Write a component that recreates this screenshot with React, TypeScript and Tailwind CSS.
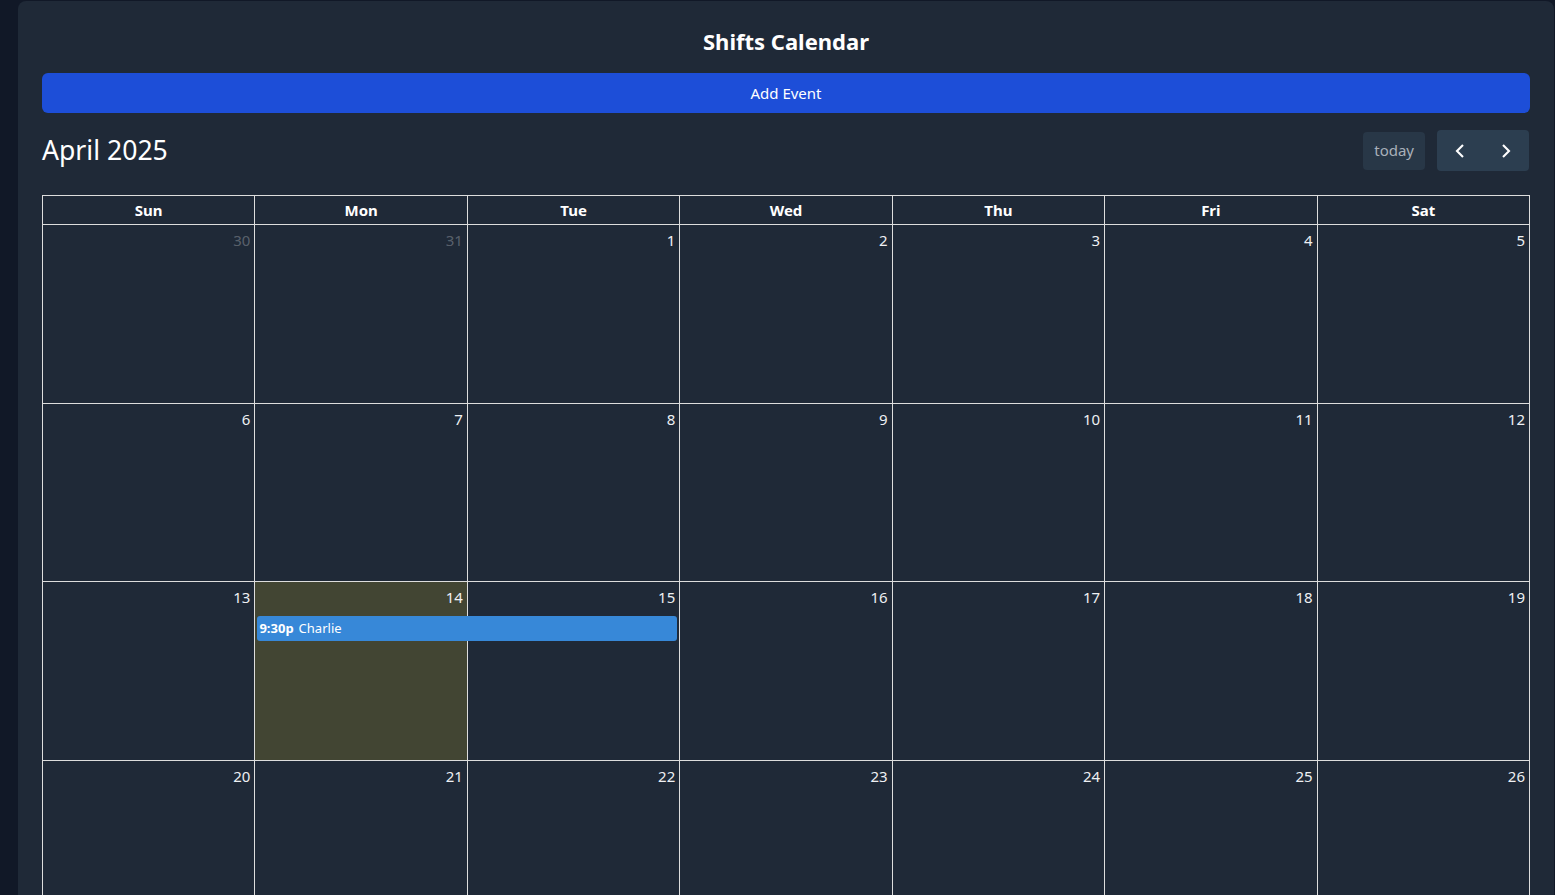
import React from "react";

const days = ["Sun", "Mon", "Tue", "Wed", "Thu", "Fri", "Sat"];

type Cell = { n: number; other?: boolean; today?: boolean };

const weeks: Cell[][] = [
  [{ n: 30, other: true }, { n: 31, other: true }, { n: 1 }, { n: 2 }, { n: 3 }, { n: 4 }, { n: 5 }],
  [{ n: 6 }, { n: 7 }, { n: 8 }, { n: 9 }, { n: 10 }, { n: 11 }, { n: 12 }],
  [{ n: 13 }, { n: 14, today: true }, { n: 15 }, { n: 16 }, { n: 17 }, { n: 18 }, { n: 19 }],
  [{ n: 20 }, { n: 21 }, { n: 22 }, { n: 23 }, { n: 24 }, { n: 25 }, { n: 26 }],
  [{ n: 27 }, { n: 28 }, { n: 29 }, { n: 30 }, { n: 1, other: true }, { n: 2, other: true }, { n: 3, other: true }],
  [{ n: 4, other: true }, { n: 5, other: true }, { n: 6, other: true }, { n: 7, other: true }, { n: 8, other: true }, { n: 9, other: true }, { n: 10, other: true }],
];

const Chevron = ({ dir }: { dir: "l" | "r" }) => (
  <svg width="18" height="18" viewBox="0 0 24 24" fill="none" stroke="currentColor" strokeWidth="2.8" strokeLinecap="square" strokeLinejoin="miter">
    {dir === "l" ? <path d="M15 5l-7 7 7 7" /> : <path d="M9 5l7 7-7 7" />}
  </svg>
);

export default function App() {
  return (
    <div
      className="min-h-screen bg-[#111827] text-white overflow-hidden"
      style={{ fontFamily: '"Noto Sans", "Open Sans", sans-serif' }}
    >
      <div className="ml-[18px] mt-px w-[1536px] rounded-t-lg bg-[#1f2937] px-6 pt-6">
        <h1 className="text-center text-[22px] leading-8 font-bold text-white">Shifts Calendar</h1>
        <button className="mt-4 h-10 w-full rounded-md bg-[#1d4ed8] text-[15px] text-white">Add Event</button>

        <div className="mt-[17px] mb-6 flex h-[41px] items-center justify-between">
          <h2 className="text-[26.6px] leading-none text-white">April 2025</h2>
          <div className="mr-px flex items-center gap-3">
            <button className="h-[38px] rounded bg-[#283747] px-[11px] text-[15px] text-[#a8b0ba]">today</button>
            <div className="flex h-[41px] overflow-hidden rounded bg-[#2c3e50]">
              <button className="flex w-[46px] items-center justify-center text-white">
                <Chevron dir="l" />
              </button>
              <button className="flex w-[46px] items-center justify-center text-white">
                <Chevron dir="r" />
              </button>
            </div>
          </div>
        </div>

        <div className="border-l border-t border-[#dddddd]">
          <div className="grid grid-cols-7">
            {days.map((d) => (
              <div key={d} className="border-b border-r border-[#dddddd] py-[3px] text-center text-[15px] font-bold leading-[22px] text-white">
                {d}
              </div>
            ))}
          </div>
          {weeks.map((w, wi) => (
            <div key={wi} className="grid grid-cols-7">
              {w.map((c, ci) => (
                <div
                  key={ci}
                  className={`relative h-[178.67px] border-b border-r border-[#dddddd] ${c.today ? "bg-[#424533]" : ""}`}
                >
                  <div className={`p-1 text-right text-[15px] leading-[22px] ${c.other ? "text-[#e5e7eb]/30" : "text-[#eef0f3]"}`}>
                    {c.n}
                  </div>
                  {wi === 2 && ci === 1 && (
                    <div className="absolute left-[2px] top-[34px] z-10 flex h-[25px] w-[420px] items-center rounded-[3px] bg-[#3788d8] px-[2px] text-[13px] text-white">
                      <span className="font-bold">9:30p</span>
                      <span className="ml-[5px]">Charlie</span>
                    </div>
                  )}
                </div>
              ))}
            </div>
          ))}
        </div>
      </div>
    </div>
  );
}
